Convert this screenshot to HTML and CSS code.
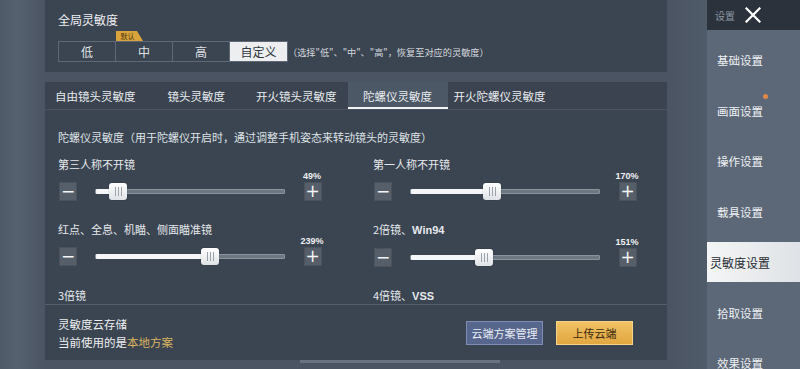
FILE: index.html
```html
<!DOCTYPE html>
<html lang="zh">
<head>
<meta charset="utf-8">
<link rel="stylesheet" href="styles.css">
</head>
<body>
<div class="app">
  <div class="strip"></div>
  <div class="main">
    <section class="panel top">
      <div class="title">全局灵敏度</div>
      <div class="seg-row">
        <div class="seg">
          <div class="cell">低</div>
          <div class="cell has-tag">中<span class="tag">默认</span></div>
          <div class="cell">高</div>
          <div class="cell on">自定义</div>
        </div>
        <div class="hint">（选择"低"、"中"、"高"，恢复至对应的灵敏度）</div>
      </div>
    </section>
    <section class="panel mid">
      <div class="tabs">
        <div class="tab t1">自由镜头灵敏度</div>
        <div class="tab t2">镜头灵敏度</div>
        <div class="tab t3">开火镜头灵敏度</div>
        <div class="tab t4 active">陀螺仪灵敏度</div>
        <div class="tab t5">开火陀螺仪灵敏度</div>
      </div>
      <div class="content">
        <div class="desc">陀螺仪灵敏度（用于陀螺仪开启时，通过调整手机姿态来转动镜头的灵敏度）</div>
        <div class="grid">
          <div class="item">
            <div class="label">第三人称不开镜</div>
            <div class="ctrl">
              <div class="btn">&minus;</div>
              <div class="track"><div class="fill" style="width:14%"></div><div class="thumb" style="left:13px"><i></i><i></i><i></i></div></div>
              <div class="pbox"><span class="pct">49%</span><div class="btn">+</div></div>
            </div>
          </div>
          <div class="item">
            <div class="label">第一人称不开镜</div>
            <div class="ctrl">
              <div class="btn">&minus;</div>
              <div class="track"><div class="fill" style="width:42%"></div><div class="thumb" style="left:72px"><i></i><i></i><i></i></div></div>
              <div class="pbox"><span class="pct">170%</span><div class="btn">+</div></div>
            </div>
          </div>
          <div class="item">
            <div class="label">红点、全息、机瞄、侧面瞄准镜</div>
            <div class="ctrl">
              <div class="btn">&minus;</div>
              <div class="track"><div class="fill" style="width:60%"></div><div class="thumb" style="left:105px"><i></i><i></i><i></i></div></div>
              <div class="pbox"><span class="pct">239%</span><div class="btn">+</div></div>
            </div>
          </div>
          <div class="item">
            <div class="label">2倍镜、<b>Win94</b></div>
            <div class="ctrl">
              <div class="btn">&minus;</div>
              <div class="track"><div class="fill" style="width:36%"></div><div class="thumb" style="left:64px"><i></i><i></i><i></i></div></div>
              <div class="pbox"><span class="pct">151%</span><div class="btn">+</div></div>
            </div>
          </div>
          <div class="item">
            <div class="label">3倍镜</div>
          </div>
          <div class="item">
            <div class="label">4倍镜、<b>VSS</b></div>
          </div>
        </div>
      </div>
    </section>
    <section class="panel bottom">
      <div class="cloud">
        <div class="c1">灵敏度云存储</div>
        <div class="c2">当前使用的是<span class="gold">本地方案</span></div>
      </div>
      <div class="actions">
        <div class="abtn blue">云端方案管理</div>
        <div class="abtn yellow">上传云端</div>
      </div>
    </section>
    <div class="scrollbar"></div>
  </div>
  <div class="gutter"></div>
  <aside class="side">
    <div class="side-head"><span class="sh-t">设置</span>
      <svg class="close" width="16" height="16" viewBox="0 0 16 16"><path d="M1.5 1.5 L14.5 14.5 M14.5 1.5 L1.5 14.5" stroke="#ffffff" stroke-width="2.2" stroke-linecap="square"/></svg>
    </div>
    <nav class="menu">
      <div class="mi">基础设置</div>
      <div class="mi">画面设置<span class="dot"></span></div>
      <div class="mi">操作设置</div>
      <div class="mi">载具设置</div>
      <div class="mi act">灵敏度设置</div>
      <div class="mi">拾取设置</div>
      <div class="mi">效果设置</div>
    </nav>
  </aside>
</div>
</body>
</html>
```

FILE: styles.css
```css
* { box-sizing: border-box; }
html, body { margin: 0; padding: 0; }
body {
  width: 800px; height: 369px; overflow: hidden;
  background: #4a5462;
  font-family: "Noto Sans CJK SC", "Noto Sans", sans-serif;
  color: #e9ecef;
}
.app { display: flex; width: 800px; height: 369px; overflow: hidden; }
.strip {
  width: 45px; flex: none;
  background: linear-gradient(90deg, #4f5a68 0%, #56616f 40%, #4a5462 100%);
}
.main { width: 622px; flex: none; display: flex; flex-direction: column; }
.panel { background: #3b4451; }
.top { height: 72px; padding: 12px 0 0 13px; }
.title { font-size: 12px; line-height: 16px; color: #eef0f2; }
.seg-row { display: flex; align-items: center; margin-top: 13px; }
.seg { display: flex; height: 21px; border: 1px solid #5f6976; }
.cell {
  width: 57px; height: 100%; display: flex; align-items: center; justify-content: center;
  font-size: 12px; color: #dfe3e7; border-right: 1px solid #5f6976; position: relative;
}
.cell:last-child { border-right: none; }
.cell.on { background: #eceef0; color: #2f3640; }
.tag {
  position: absolute; left: 0; top: -11px; width: 27px; height: 10px;
  background: #d9a43c; color: #4a3310; font-size: 7px; line-height: 10px; text-align: center;
  clip-path: polygon(0 0, 78% 0, 100% 100%, 0 100%);
  padding-right: 4px;
}
.hint { font-size: 9.2px; color: #d5d9de; margin-left: 0; white-space: nowrap; }

.mid { margin-top: 10px; height: 222px; display: flex; flex-direction: column; flex: none; }
.tabs {
  display: flex; height: 28px; align-items: stretch; flex: none;
  border-bottom: 1px solid #4a5360; background: #3a434f;
}
.tab {
  font-size: 11.5px; color: #e8ebee; display: flex; align-items: center; justify-content: center;
  white-space: nowrap; flex: none;
}
.t1 { margin-left: 10px; }
.t2 { margin-left: 32px; }
.t3 { margin-left: 31px; }
.t4 { margin-left: 11px; width: 100px; }
.t5 { margin-left: 6px; }
.tab.active { background: #4d5866; border-bottom: 2px solid #f2f4f6; padding-top: 2px; }
.content { padding: 19px 0 0 13px; flex: 1; overflow: hidden; }
.desc { font-size: 11px; color: #dfe3e7; line-height: 16px; }
.grid { display: grid; grid-template-columns: 315px 300px; margin-top: 12px; row-gap: 21px; }
.label { font-size: 11px; line-height: 14px; color: #e6e9ec; white-space: nowrap; }
.label b { font-family: "Liberation Sans", Arial, sans-serif; font-weight: bold; font-size: 11px; }
.ctrl { display: flex; align-items: flex-end; height: 30px; }
.btn {
  width: 18px; height: 19px; background: #565e69; border: 1px solid #4b525c;
  display: flex; align-items: center; justify-content: center;
  font-size: 17px; line-height: 1; color: #f4f5f6; font-family: "DejaVu Sans", sans-serif;
  flex: none; margin-left: 1px;
}
.track {
  position: relative; width: 190px; height: 5px; margin: 0 18px 7px 18px;
  background: #6e7682; border: 1px solid #8a929c; border-radius: 1px; flex: none;
}
.fill { position: absolute; left: 0; top: -1px; bottom: -1px; background: #f5f6f7; border-radius: 1px; }
.thumb {
  position: absolute; top: -7px; width: 18px; height: 17px;
  background: linear-gradient(#ffffff, #dfe2e6); border-radius: 3px;
  display: flex; align-items: center; justify-content: center; gap: 2px;
  box-shadow: 0 0 1px rgba(0,0,0,0.5);
}
.thumb i { display: block; width: 1px; height: 9px; background: #9aa1aa; }
.pbox { display: flex; flex-direction: column; align-items: center; width: 18px; flex: none; }
.pct {
  font-size: 9px; line-height: 10px; color: #eef0f2; margin-bottom: 1px;
  font-family: "Liberation Sans", sans-serif; font-weight: bold; white-space: nowrap;
}

.bottom {
  height: 56px; display: flex; align-items: center; justify-content: space-between; flex: none;
  padding: 0 34px 0 13px; border-top: 1px solid #56606d;
}
.c1, .c2 { font-size: 11.5px; line-height: 18px; color: #eef0f2; }
.gold { color: #d8b460; }
.actions { display: flex; gap: 13px; }
.abtn {
  width: 77px; height: 24px; display: flex; align-items: center; justify-content: center;
  font-size: 11px;
}
.blue { background: #56668c; border: 1px solid #7f8db4; color: #e9edf6; }
.yellow { background: linear-gradient(#f0c364, #e1a640); color: #3b2a0e; border: 1px solid #f5d48a; }
.scrollbar { height: 3px; width: 200px; margin: 0 0 0 255px; background: #69737f; flex: none; }

.gutter { width: 40px; flex: none; background: linear-gradient(90deg, #4a5462, #505b6a); }
.side { width: 93px; flex: none; background: #5c6778; display: flex; flex-direction: column; overflow: hidden; }
.side-head {
  height: 30px; background: #2b323c; display: flex; align-items: center; padding-left: 8px; flex: none;
}
.sh-t { font-size: 10px; color: #8d96a1; }
.close { margin-left: 10px; }
.menu { display: flex; flex-direction: column; padding-top: 5px; }
.mi {
  height: 50.5px; display: flex; align-items: center; padding-left: 10px; flex: none;
  font-size: 11.5px; color: #eef1f4; position: relative;
}
.mi.act {
  background: linear-gradient(90deg, #f4f5f6, #dfe2e6) center / 100% 40px no-repeat;
  color: #262c34; padding-left: 3px; font-size: 12px;
}
.dot {
  position: absolute; left: 56px; top: 8px; width: 5px; height: 5px; border-radius: 50%;
  background: #e08a4a;
}
```
